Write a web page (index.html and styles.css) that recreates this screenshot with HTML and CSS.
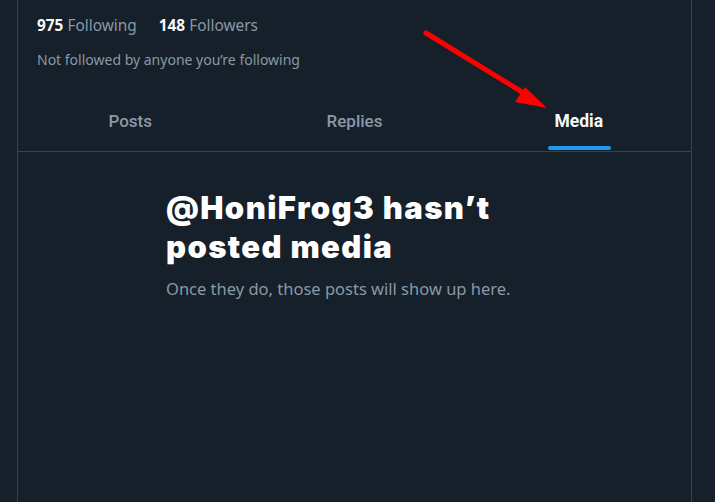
FILE: index.html
```html
<!DOCTYPE html>
<html lang="en">
<head>
<meta charset="utf-8">
<title>Media</title>
<link rel="stylesheet" href="styles.css">
</head>
<body>
<div class="page">
  <main class="column">
    <section class="profile-meta">
      <div class="stats">
        <span class="stat"><b>975</b> Following</span>
        <span class="stat"><b>148</b> Followers</span>
      </div>
      <p class="known">Not followed by anyone you’re following</p>
    </section>
    <nav class="tabs">
      <div class="tab">Posts</div>
      <div class="tab">Replies</div>
      <div class="tab active">Media<span class="indicator"></span></div>
    </nav>
    <section class="empty">
      <h2 class="empty-title">@HoniFrog3 hasn’t posted media</h2>
      <p class="empty-text">Once they do, those posts will show up here.</p>
    </section>
    <svg class="arrow" width="140" height="100" viewBox="0 0 140 100" aria-hidden="true">
      <line x1="17" y1="13" x2="113" y2="72" stroke="#ff0000" stroke-width="5" stroke-linecap="round"/>
      <polygon points="138,88 106,82 116,67" fill="#ff0000"/>
    </svg>
  </main>
</div>
</body>
</html>
```
FILE: styles.css
```css
html, body {
  margin: 0;
  padding: 0;
  background: #15202b;
}
body {
  font-family: "Noto Sans", "Liberation Sans", sans-serif;
  color: #f7f9f9;
}
.page {
  min-height: 502px;
  padding-left: 17px;
}
.column {
  position: relative;
  width: 673px;
  min-height: 502px;
  border-left: 1px solid #38444d;
  border-right: 1px solid #38444d;
}
.profile-meta {
  padding: 15px 19px 0 19px;
  height: 98px;
  box-sizing: border-box;
}
.stats {
  display: flex;
  gap: 22px;
  font-size: 15.4px;
  line-height: 22px;
  color: #8b98a5;
}
.stat b {
  color: #f7f9f9;
  font-weight: 700;
}
.known {
  margin: 13px 0 0;
  font-size: 14px;
  line-height: 20px;
  color: #8b98a5;
}
.tabs {
  display: flex;
  height: 53px;
  border-bottom: 1px solid #38444d;
}
.tab {
  position: relative;
  flex: 1;
  display: flex;
  justify-content: center;
  padding-top: 13px;
  font-family: Roboto, "Noto Sans", sans-serif;
  font-size: 17px;
  line-height: 20px;
  font-weight: 500;
  color: #8b98a5;
}
.tab.active {
  color: #f7f9f9;
  font-weight: 700;
  font-size: 17.5px;
}
.indicator {
  position: absolute;
  bottom: 1px;
  left: 50%;
  width: 63px;
  margin-left: -31px;
  height: 4px;
  border-radius: 2px;
  background: #1d9bf0;
}
.empty {
  padding: 37px 0 0 148px;
}
.empty-title {
  margin: 0;
  width: 380px;
  font-family: Inter, "Noto Sans", sans-serif;
  font-size: 31px;
  font-weight: 900;
  letter-spacing: 1.4px;
  line-height: 38.5px;
  color: #ffffff;
}
.empty-text {
  margin: 12px 0 0;
  font-size: 16.5px;
  line-height: 22px;
  color: #8b98a5;
}
.arrow {
  position: absolute;
  left: 391px;
  top: 20px;
}
```
